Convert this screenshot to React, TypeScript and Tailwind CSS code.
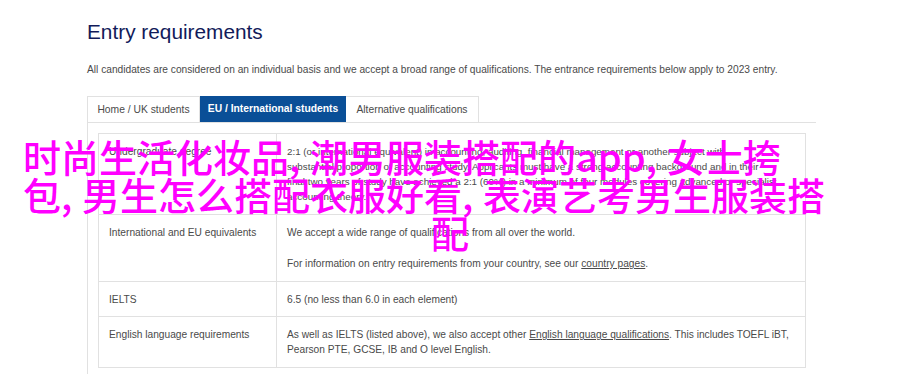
const body = "font-['Liberation_Sans',Arial,sans-serif]";

function Comma() {
  return <span className="inline-block w-[21px]">,</span>;
}

export default function App() {
  return (
    <div className={`relative h-[383px] w-[900px] overflow-hidden bg-white ${body}`}>
      <div className="pl-[87px] pr-[84px] pt-[20px]">
        <h2 className="text-[20.8px] leading-[24px] text-[#121b5a]">Entry requirements</h2>
        <p className="mt-[18px] text-[10.2px] leading-[15px] text-[#4a4a4a]">
          All candidates are considered on an individual basis and we accept a broad range of qualifications. The
          entrance requirements below apply to 2023 entry.
        </p>

        {/* tabs */}
        <div className="mt-[19px] flex border-b border-[#e1e1e1] text-[10.3px]">
          <div className="flex h-[26px] w-[113px] items-center justify-center border-x border-t border-[#e1e1e1] text-[#4a4a4a]">
            Home / UK students
          </div>
          <div className="flex h-[26px] w-[146px] items-center justify-center bg-[#0a4f97] font-bold text-white">
            EU / International students
          </div>
          <div className="flex h-[26px] w-[133px] items-center justify-center border-r border-t border-[#e1e1e1] text-[#4a4a4a]">
            Alternative qualifications
          </div>
        </div>

        {/* panel */}
        <div className="border-l border-[#e1e1e1] pb-[6px] pl-[10px] pr-[10px] pt-[10px]">
          <table className="w-full border-collapse text-[10.2px] leading-[15px] text-[#4a4a4a]">
            <tbody>
              <tr>
                <td className="w-[178px] border border-[#e1e1e1] px-[10px] py-[10px] align-top">Undergraduate degree</td>
                <td className="border border-[#e1e1e1] px-[10px] py-[10px] align-top text-[9.8px]">
                  2:1 (or international equivalent) in accounting, auditing, financial management or another subject with
                  <br />
                  substantial proportion of accounting study. Applicants must have a strong accounting background and in their
                  <br />
                  final two years of study have achieved a 2:1 (60%) in a minimum of four modules covering advanced or specialist
                  <br />
                  accounting theory.
                </td>
              </tr>
              <tr>
                <td className="border border-[#e1e1e1] px-[10px] py-[10px] align-top">International and EU equivalents</td>
                <td className="border border-[#e1e1e1] px-[10px] py-[10px] align-top">
                  <p>We accept a wide range of qualifications from all over the world.</p>
                  <p className="mt-[16px]">
                    For information on entry requirements from your country, see our{" "}
                    <span className="underline">country pages</span>.
                  </p>
                </td>
              </tr>
              <tr>
                <td className="border border-[#e1e1e1] px-[10px] py-[9.5px] align-top">IELTS</td>
                <td className="border border-[#e1e1e1] px-[10px] py-[9.5px] align-top">
                  6.5 (no less than 6.0 in each element)
                </td>
              </tr>
              <tr>
                <td className="border border-[#e1e1e1] px-[10px] py-[10px] align-top">English language requirements</td>
                <td className="border border-[#e1e1e1] px-[10px] py-[10px] align-top">
                  As well as IELTS (listed above), we also accept other{" "}
                  <span className="underline">English language qualifications</span>. This includes TOEFL iBT, Pearson PTE,
                  GCSE, IB and O level English.
                </td>
              </tr>
            </tbody>
          </table>
        </div>
      </div>

      {/* title overlay */}
      <div className="absolute inset-x-0 top-[137px] font-['Noto_Sans_CJK_SC',sans-serif] text-[38px] font-medium leading-[38px] text-[#ff00ff]">
        <div className="whitespace-nowrap pl-[23px]">
          时尚生活化妆品<Comma />潮男服装搭配的app<Comma />女士挎
        </div>
        <div className="whitespace-nowrap pl-[23px]">
          包<Comma />男生怎么搭配衣服好看<Comma />表演艺考男生服装搭
        </div>
        <div className="text-center">配</div>
      </div>
    </div>
  );
}
